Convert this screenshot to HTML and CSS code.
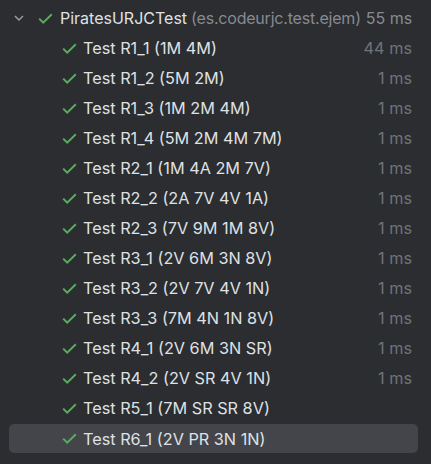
FILE: index.html
```html
<!DOCTYPE html>
<html>
<head>
<meta charset="utf-8">
<link rel="stylesheet" href="styles.css">
</head>
<body>
<div class="tree">
  <div class="row root">
    <svg class="chev" width="10" height="6" viewBox="0 0 10 6"><path d="M1 1 L5 5 L9 1" fill="none" stroke="#9da0a8" stroke-width="1.4"/></svg>
    <svg class="check" width="15" height="11" viewBox="0 0 15 11"><path d="M1.2 5.6 L5.2 9.6 L13.8 1.2" fill="none" stroke="#5fa865" stroke-width="2"/></svg>
    <span class="name">PiratesURJCTest</span><span class="pkg">(es.codeurjc.test.ejem)</span>
    <span class="time root-time">55 ms</span>
  </div>
  <div class="row child"><svg class="check" width="15" height="11" viewBox="0 0 15 11"><path d="M1.2 5.6 L5.2 9.6 L13.8 1.2" fill="none" stroke="#5fa865" stroke-width="2"/></svg><span class="name">Test R1_1 (1M 4M)</span><span class="time">44 ms</span></div>
  <div class="row child"><svg class="check" width="15" height="11" viewBox="0 0 15 11"><path d="M1.2 5.6 L5.2 9.6 L13.8 1.2" fill="none" stroke="#5fa865" stroke-width="2"/></svg><span class="name">Test R1_2 (5M 2M)</span><span class="time">1 ms</span></div>
  <div class="row child"><svg class="check" width="15" height="11" viewBox="0 0 15 11"><path d="M1.2 5.6 L5.2 9.6 L13.8 1.2" fill="none" stroke="#5fa865" stroke-width="2"/></svg><span class="name">Test R1_3 (1M 2M 4M)</span><span class="time">1 ms</span></div>
  <div class="row child"><svg class="check" width="15" height="11" viewBox="0 0 15 11"><path d="M1.2 5.6 L5.2 9.6 L13.8 1.2" fill="none" stroke="#5fa865" stroke-width="2"/></svg><span class="name">Test R1_4 (5M 2M 4M 7M)</span><span class="time">1 ms</span></div>
  <div class="row child"><svg class="check" width="15" height="11" viewBox="0 0 15 11"><path d="M1.2 5.6 L5.2 9.6 L13.8 1.2" fill="none" stroke="#5fa865" stroke-width="2"/></svg><span class="name">Test R2_1 (1M 4A 2M 7V)</span><span class="time">1 ms</span></div>
  <div class="row child"><svg class="check" width="15" height="11" viewBox="0 0 15 11"><path d="M1.2 5.6 L5.2 9.6 L13.8 1.2" fill="none" stroke="#5fa865" stroke-width="2"/></svg><span class="name">Test R2_2 (2A 7V 4V 1A)</span><span class="time">1 ms</span></div>
  <div class="row child"><svg class="check" width="15" height="11" viewBox="0 0 15 11"><path d="M1.2 5.6 L5.2 9.6 L13.8 1.2" fill="none" stroke="#5fa865" stroke-width="2"/></svg><span class="name">Test R2_3 (7V 9M 1M 8V)</span><span class="time">1 ms</span></div>
  <div class="row child"><svg class="check" width="15" height="11" viewBox="0 0 15 11"><path d="M1.2 5.6 L5.2 9.6 L13.8 1.2" fill="none" stroke="#5fa865" stroke-width="2"/></svg><span class="name">Test R3_1 (2V 6M 3N 8V)</span><span class="time">1 ms</span></div>
  <div class="row child"><svg class="check" width="15" height="11" viewBox="0 0 15 11"><path d="M1.2 5.6 L5.2 9.6 L13.8 1.2" fill="none" stroke="#5fa865" stroke-width="2"/></svg><span class="name">Test R3_2 (2V 7V 4V 1N)</span><span class="time">1 ms</span></div>
  <div class="row child"><svg class="check" width="15" height="11" viewBox="0 0 15 11"><path d="M1.2 5.6 L5.2 9.6 L13.8 1.2" fill="none" stroke="#5fa865" stroke-width="2"/></svg><span class="name">Test R3_3 (7M 4N 1N 8V)</span><span class="time">1 ms</span></div>
  <div class="row child"><svg class="check" width="15" height="11" viewBox="0 0 15 11"><path d="M1.2 5.6 L5.2 9.6 L13.8 1.2" fill="none" stroke="#5fa865" stroke-width="2"/></svg><span class="name">Test R4_1 (2V 6M 3N SR)</span><span class="time">1 ms</span></div>
  <div class="row child"><svg class="check" width="15" height="11" viewBox="0 0 15 11"><path d="M1.2 5.6 L5.2 9.6 L13.8 1.2" fill="none" stroke="#5fa865" stroke-width="2"/></svg><span class="name">Test R4_2 (2V SR 4V 1N)</span><span class="time">1 ms</span></div>
  <div class="row child"><svg class="check" width="15" height="11" viewBox="0 0 15 11"><path d="M1.2 5.6 L5.2 9.6 L13.8 1.2" fill="none" stroke="#5fa865" stroke-width="2"/></svg><span class="name">Test R5_1 (7M SR SR 8V)</span></div>
  <div class="row child selected"><svg class="check" width="15" height="11" viewBox="0 0 15 11"><path d="M1.2 5.6 L5.2 9.6 L13.8 1.2" fill="none" stroke="#5fa865" stroke-width="2"/></svg><span class="name">Test R6_1 (2V PR 3N 1N)</span></div>
</div>
</body>
</html>
```

FILE: styles.css
```css
html, body {
  margin: 0;
  padding: 0;
  background: #2b2d30;
}
body {
  width: 431px;
  height: 464px;
  overflow: hidden;
  font-family: Inter, "Noto Sans", sans-serif;
  font-size: 16.25px;
  color: #dfe1e5;
}
.tree {
  padding: 3px 13px 0 9px;
  display: flex;
  flex-direction: column;
}
.row {
  height: 30px;
  display: flex;
  align-items: center;
  padding-right: 6px;
  white-space: nowrap;
}
.row.selected {
  height: 29px;
  margin-top: 1px;
  background: #43454a;
  border-radius: 5px;
}
.root {
  padding-left: 5px;
  font-size: 16px;
}
.chev {
  margin-right: 14px;
  flex: none;
}
.check {
  flex: none;
  margin-right: 7px;
}
.child {
  padding-left: 53px;
}
.child .check {
  margin-right: 6px;
}
.pkg {
  color: #878a91;
  margin-left: 4px;
  letter-spacing: -0.2px;
}
.time {
  margin-left: auto;
  color: #6f737a;
}
.root-time {
  color: #878a91;
  padding-left: 5px;
}
```
